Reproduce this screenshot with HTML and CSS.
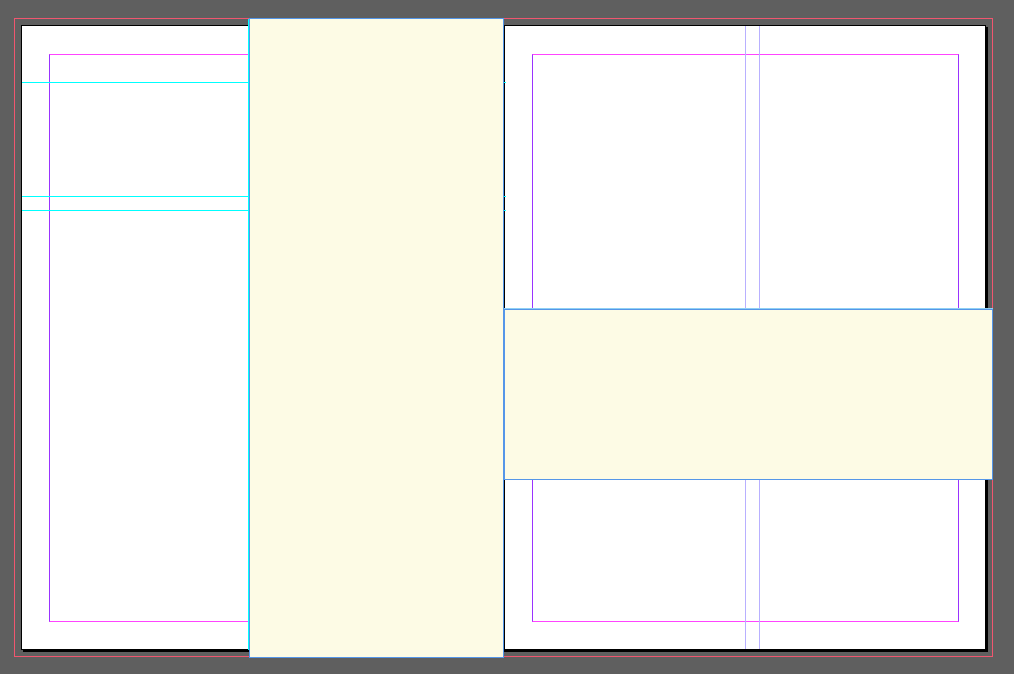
FILE: index.html
```html
<!DOCTYPE html>
<html>
<head>
<meta charset="utf-8">
<link rel="stylesheet" href="styles.css">
</head>
<body>
<div class="pasteboard">
  <div class="bleed"></div>
  <div class="spread">
    <div class="page page-left">
      <div class="margins"></div>
    </div>
    <div class="page page-right">
      <div class="margins"></div>
    </div>
  </div>
  <div class="guide hguide g1"></div>
  <div class="guide hguide g2"></div>
  <div class="guide hguide g3"></div>
  <div class="guide vguide v1"></div>
  <div class="colguide c1"></div>
  <div class="colguide c2"></div>
  <div class="frame frame-tall"></div>
  <div class="frame frame-wide"></div>
</div>
</body>
</html>
```
FILE: styles.css
```css
html, body {
  margin: 0;
  padding: 0;
  background: #5f5f5f;
}
.pasteboard {
  position: relative;
  width: 1014px;
  height: 674px;
  overflow: hidden;
  background: #5f5f5f;
}
.bleed {
  position: absolute;
  left: 14px;
  top: 18px;
  width: 979px;
  height: 639px;
  box-sizing: border-box;
  border: 1px solid #f0566f;
}
.spread {
  position: absolute;
  left: 21px;
  top: 25px;
  width: 965px;
  height: 625px;
  box-sizing: border-box;
  border: 1px solid #000;
  box-shadow: 2px 2px 0 #000;
  background: #fff;
  display: flex;
}
.page {
  box-sizing: border-box;
  height: 100%;
  padding: 28px 0 27px;
  display: flex;
}
.page-left {
  width: 482px;
  padding-left: 27px;
  padding-right: 27px;
}
.page-right {
  flex: 1;
  border-left: 1px solid #000;
  padding-left: 27px;
  padding-right: 26px;
}
.margins {
  flex: 1;
  border-top: 1px solid #ff44ff;
  border-bottom: 1px solid #ff44ff;
  border-left: 1px solid #9933ff;
  border-right: 1px solid #9933ff;
}
.guide {
  position: absolute;
  background: #00ffff;
}
.hguide {
  left: 22px;
  width: 484px;
  height: 1px;
}
.g1 { top: 82px; }
.g2 { top: 196px; }
.g3 { top: 210px; }
.vguide {
  width: 1px;
}
.v1 { left: 248px; top: 19px; height: 631px; }
.colguide {
  position: absolute;
  top: 26px;
  height: 623px;
  width: 1px;
  background: #b8b0ff;
}
.c1 { left: 745px; }
.c2 { left: 759px; }
.frame {
  position: absolute;
  box-sizing: border-box;
  background: #fdfbe5;
  border: 1px solid #5596e8;
}
.frame-tall {
  left: 249px;
  top: 18px;
  width: 255px;
  height: 640px;
}
.frame-wide {
  left: 504px;
  top: 309px;
  width: 489px;
  height: 171px;
  box-shadow: 0 -1px 0 #8fd0f4;
}
```
